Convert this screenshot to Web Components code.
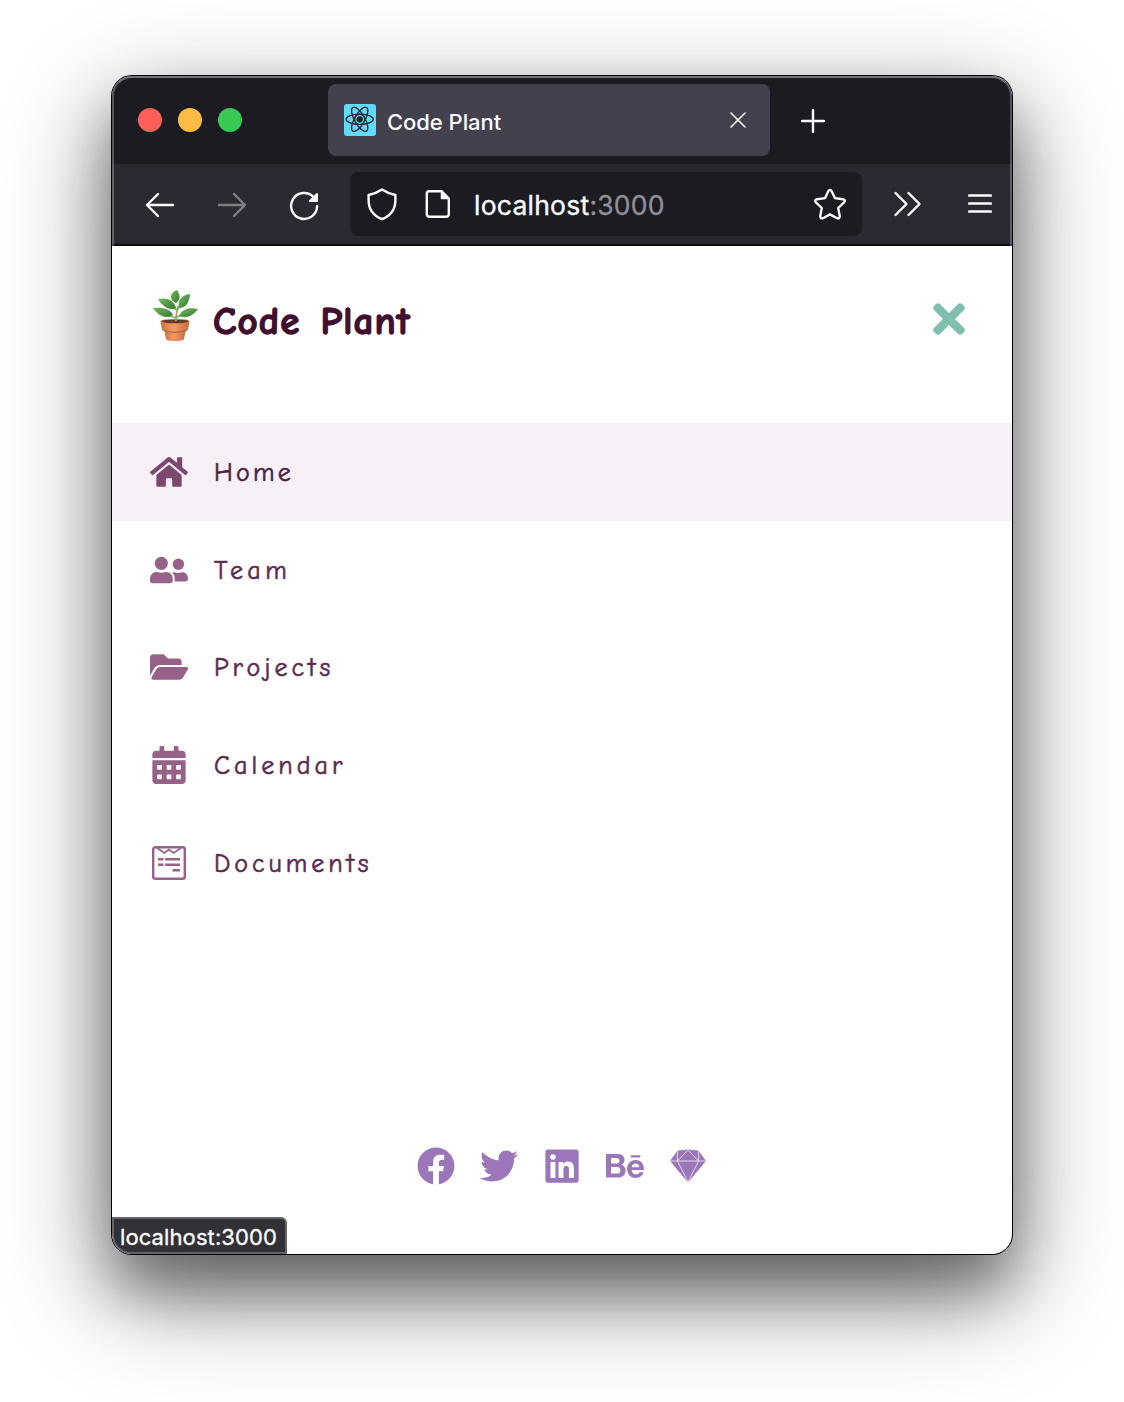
<!DOCTYPE html>
<html lang="en"><head><meta charset="utf-8"><title>Code Plant</title>
<style>
html,body{margin:0;background:#fff}
body{width:1124px;height:1402px;overflow:hidden;font-family:Inter,"Liberation Sans",sans-serif}
</style></head><body>
<browser-window>
  <tab-bar slot="chrome">Code Plant</tab-bar>
  <nav-bar slot="chrome"></nav-bar>
  <site-header>Code Plant</site-header>
  <site-menu>
    <menu-item icon="home" active style="--ls:3.200px">Home</menu-item>
    <menu-item icon="team" style="--ls:4.400px">Team</menu-item>
    <menu-item icon="folder" style="--ls:4.050px">Projects</menu-item>
    <menu-item icon="calendar" style="--ls:4.050px">Calendar</menu-item>
    <menu-item icon="document" style="--ls:3.950px">Documents</menu-item>
  </site-menu>
  <social-links></social-links>
  <status-bubble slot="status">localhost:3000</status-bubble>
</browser-window>
<script>
const ICONS={
home:`<svg width="38" height="34" viewBox="0 0 576 512"><path d="M280.37 148.26L96 300.11V464a16 16 0 0 0 16 16l112.06-.29a16 16 0 0 0 15.92-16V368a16 16 0 0 1 16-16h64a16 16 0 0 1 16 16v95.64a16 16 0 0 0 16 16.05L464 480a16 16 0 0 0 16-16V300L295.67 148.26a12.19 12.19 0 0 0-15.3 0zM571.6 251.47L488 182.56V44.05a12 12 0 0 0-12-12h-56a12 12 0 0 0-12 12v72.61L318.47 43a48 48 0 0 0-61 0L4.34 251.47a12 12 0 0 0-1.6 16.9l25.5 31A12 12 0 0 0 45.15 301l235.22-193.74a12.19 12.19 0 0 1 15.3 0L530.9 301a12 12 0 0 0 16.9-1.6l25.5-31a12 12 0 0 0-1.7-16.93z"/></svg>`,
team:`<svg width="38" height="28" viewBox="0 0 38 28"><circle cx="11.3" cy="7.3" r="6.6"/><circle cx="28.4" cy="8.3" r="5.7"/><path d="M7.6 16Q11.3 17.6 15 16C20 15.4 22.8 19 22.8 23.5V24.6Q22.8 27.3 20 27.3H2.8Q0 27.3 0 24.6V23.5C0 19 2.8 15.4 7.6 16ZM24.6 16.2Q28.4 17.6 31.8 16.2C35.5 16 38 18.7 38 22.4Q38 25.4 35 25.4H24.7C25 21.500 24.600 18.800 22.200 16.700Q23.300 16.100 24.600 16.200Z"/></svg>`,
folder:`<svg width="38" height="34" viewBox="0 0 576 512"><path d="M572.694 292.093L500.27 416.248A63.997 63.997 0 0 1 444.989 448H45.025c-18.523 0-30.064-20.093-20.731-36.093l72.424-124.155A64 64 0 0 1 152 256h399.964c18.523 0 30.064 20.093 20.73 36.093zM152 224h328v-48c0-26.51-21.49-48-48-48H272l-64-64H48C21.49 64 0 85.49 0 112v278.046l69.077-118.418C86.214 242.25 117.989 224 152 224z"/></svg>`,
calendar:`<svg width="34" height="38" viewBox="0 0 448 512"><path fill-rule="evenodd" d="M0 464c0 26.500 21.500 48 48 48h352c26.500 0 48-21.500 48-48V192H0zM64 268q0-12 12-12h40q12 0 12 12v40q0 12-12 12H76q-12 0-12-12zM192 268q0-12 12-12h40q12 0 12 12v40q0 12-12 12h-40q-12 0-12-12zM320 268q0-12 12-12h40q12 0 12 12v40q0 12-12 12h-40q-12 0-12-12zM64 396q0-12 12-12h40q12 0 12 12v40q0 12-12 12H76q-12 0-12-12zM192 396q0-12 12-12h40q12 0 12 12v40q0 12-12 12h-40q-12 0-12-12zM320 396q0-12 12-12h40q12 0 12 12v40q0 12-12 12h-40q-12 0-12-12zM400 64h-48V16c0-8.800-7.200-16-16-16h-32c-8.800 0-16 7.200-16 16v48H160V16c0-8.800-7.200-16-16-16h-32c-8.800 0-16 7.200-16 16v48H48C21.500 64 0 85.500 0 112v48h448v-48c0-26.500-21.500-48-48-48z"/></svg>`,
document:`<svg width="34" height="34" viewBox="0 0 34 34"><rect x="1.200" y="1.200" width="31.600" height="31.600" rx="2" fill="none" stroke="currentColor" stroke-width="2.400"/><path d="M5 2L12.300 7L17 3.500L21.700 7L29 2" fill="none" stroke="currentColor" stroke-width="1.700"/><path d="M6 12h5.500v2.400H6zM13.200 12H28v2.400H13.200zM6 17.500h5.500v2.400H6zM13.200 17.500H28v2.400H13.200zM20.500 23H28v2.400h-7.500z"/></svg>`
};
function element(name,html){
  const t=document.createElement('template');t.innerHTML=html;
  customElements.define(name,class extends HTMLElement{
    constructor(){super();this.attachShadow({mode:'open'}).append(t.content.cloneNode(true));}
    connectedCallback(){const box=this.shadowRoot.querySelector('[data-icon]');if(box)box.innerHTML=ICONS[this.getAttribute('icon')];}
  });
}
element('browser-window',`<style>
:host{display:block;padding:76px 112px}
.w{position:relative;width:900px;height:1178px;border-radius:20px;background:#fff;box-shadow:0 0 0 1px #000,0 36px 60px rgba(0,0,0,.38),0 36px 110px rgba(0,0,0,.46)}
.in{display:flex;flex-direction:column;height:100%;border-radius:20px;overflow:hidden}
.rim{position:absolute;inset:0 0 auto;height:170px;box-sizing:border-box;border:2px solid rgba(255,255,255,.25);border-top-color:rgba(255,255,255,.38);border-bottom:0;border-radius:20px 20px 0 0;pointer-events:none}
</style><div class="w"><div class="in"><slot name="chrome"></slot><slot></slot><slot name="status"></slot></div><div class="rim"></div></div>`);
element('tab-bar',`<style>
:host{display:flex;flex:none;box-sizing:border-box;height:88px;background:#1c1b22;padding:8px 0 8px 26px;align-items:center;color:#fbfbfe}
.d{display:flex;gap:16px;width:190px}.d i{width:24px;height:24px;border-radius:50%}
.t{display:flex;align-items:center;box-sizing:border-box;width:442px;height:72px;border-radius:8px;background:#42414d;padding:0 24px 0 16px}
.n{flex:1;margin-left:11px;padding-top:3px;font-size:22px;letter-spacing:-.05px;font-weight:500;white-space:nowrap}
.p{margin:2px 0 0 31px}svg{display:block}
</style><div class="d"><i style="background:#ff6159"></i><i style="background:#ffbd45"></i><i style="background:#38c955"></i></div>
<div class="t"><svg width="32" height="32" viewBox="0 0 32 32"><rect width="32" height="32" rx="3" fill="#61dafb"/><g fill="none" stroke="#20232a" stroke-width="1.300" transform="translate(15.700 15.300)"><ellipse rx="13.600" ry="5.100"/><ellipse rx="13.600" ry="5.100" transform="rotate(60)"/><ellipse rx="13.600" ry="5.100" transform="rotate(120)"/><circle r="5.300" stroke="none" fill="#61dafb"/><circle r="5"/><circle r="2.500" fill="#20232a"/></g></svg><span class="n"><slot></slot></span><svg width="16" height="16" viewBox="0 0 16 16" fill="none" stroke="#fbfbfe" stroke-width="1.600" stroke-linecap="round"><path d="M1 1l14 14M15 1L1 15"/></svg></div>
<svg class="p" width="24" height="24" viewBox="0 0 24 24" fill="none" stroke="#fbfbfe" stroke-width="2.400" stroke-linecap="round"><path d="M12 1v22M1 12h22"/></svg>`);
element('nav-bar',`<style>
:host{display:flex;flex:none;box-sizing:border-box;height:82px;background:#2b2a33;border-bottom:2px solid #0c0c0d;align-items:center;padding:0 20px 0 32px;color:#fbfbfe}
svg{display:block;fill:none;stroke:#fbfbfe;stroke-width:2.400;stroke-linecap:round;stroke-linejoin:round}
.nav{display:flex;gap:40px;width:206px;padding-top:2px}
.u{display:flex;align-items:center;box-sizing:border-box;width:512px;height:64px;border-radius:8px;background:#1c1b22;padding:0 15px 0 16px}
.a{flex:1;font-size:26.500px;-webkit-text-stroke:.35px;letter-spacing:.24px;margin-left:23px;padding-top:1px}.a span{color:#8f8f96}
</style><div class="nav"><svg width="32" height="32" viewBox="0 0 32 32"><path d="M29 16H3M14 5L3 16l11 11"/></svg><svg width="32" height="32" viewBox="0 0 32 32" style="opacity:.4"><path d="M3 16h26M18 5l11 11-11 11"/></svg><svg width="32" height="32" viewBox="0 0 32 32"><path d="M29.100 17A13 13 0 1 1 25.500 8"/><path d="M29 5v7h-7z" fill="#fbfbfe" stroke-width="2"/></svg></div>
<div class="u"><svg width="32" height="34" viewBox="0 0 32 34"><path d="M16 2.500C12 5.200 7 7 2.600 8V13C2.600 22 7.500 28.800 16 32.200C24.500 28.800 29.400 22 29.400 13V8C25 7 20 5.200 16 2.500Z"/></svg><svg width="26" height="30" viewBox="0 0 26 30" style="margin-left:27px"><path d="M4 2.200H16.500L23.800 9.500V25Q23.800 27.800 21 27.800H4.500Q1.800 27.800 1.800 25V4.500Q1.800 2.200 4 2.200Z"/><path d="M16.500 2.200V9.500H23.800Z" fill="#fbfbfe" stroke-width="1.500"/></svg><span class="a">localhost<span>:3000</span></span><svg width="34" height="32" viewBox="0 0 34 32"><path d="M15.300 3.200Q17 .5 18.700 3.200L21.900 10.100L29.800 11.200Q33.200 12 31 14.500L25.200 20L26.700 27.900Q26.900 31 24 30.200L17 26.400L10 30.200Q7.100 31 7.300 27.900L8.800 20L3 14.500Q.8 12 4.200 11.200L12.100 10.100Z"/></svg></div>
<svg style="margin-left:31px" width="30" height="26" viewBox="0 0 30 26"><path d="M2.500 2L13.500 13L2.500 24M15.500 2l11 11l-11 11"/></svg><svg style="margin:0 0 1px auto" width="24" height="20" viewBox="0 0 24 20"><path d="M1 1.500h22M1 9.500h22M1 17.500h22"/></svg>`);
element('site-header',`<style>
:host{display:flex;flex:none;box-sizing:border-box;height:177px;padding:43px 46px 0 40px;align-items:flex-start}
h1{margin:7px 0 0 13px;font:700 39px/52px "Comic Neue","Comic Sans MS",Lato,sans-serif;letter-spacing:1.100px;word-spacing:5px;-webkit-text-stroke:1.300px;color:#41102f;flex:1}
.x{margin-top:10px;fill:#80bfb0}svg{display:block}
</style><svg width="48" height="54" viewBox="0 0 48 54"><defs><linearGradient id="p"><stop stop-color="#c87544"/><stop offset=".45" stop-color="#f29a63"/><stop offset="1" stop-color="#c06e40"/></linearGradient><linearGradient id="l" x2="1" y2="1"><stop stop-color="#72b85a"/><stop offset="1" stop-color="#337c31"/></linearGradient></defs>
<g stroke="#8fae66" stroke-width="1.800" fill="none"><path d="M24 33Q24 24 26 17M24 29Q14 26 10 24M24 28Q33 26 40 22M25 21Q17 17 12 14M25 21Q29 17 33 10"/></g>
<g fill="url(#l)"><path d="M24 14C17 11 17 4 25 1C29 7 28 11 24 14Z"/><path d="M24 19C17 22 10 17 6 10C15 8 22 11 24 19Z"/><path d="M27 19C25 11 30 6 38 5C37 15 33 19 27 19Z"/><path d="M21 26C15 30 7 28 1 19C10 18 19 20 21 26Z"/><path d="M27 27C30 20 37 18 46 20C41 27 34 30 27 27Z"/></g>
<path d="M12 40H34L32 50Q31 52 23 52Q15 52 14 50Z" fill="url(#p)"/><path d="M8.500 32Q9 30 23 30Q37 30 37.500 32L36 41Q32 43.500 23 43.500Q14 43.500 10 41Z" fill="url(#p)"/><ellipse cx="23" cy="32.300" rx="13" ry="1.900" fill="#643a2b"/><path d="M11.500 41.500Q23 45 34.500 41.500" stroke="#a95d37" fill="none"/><path d="M24 32V27" stroke="#8fae66" stroke-width="1.800"/></svg>
<h1><slot></slot></h1><svg class="x" width="34" height="40" viewBox="-10 34 372 444"><path d="M242.720 256l100.070-100.070c12.280-12.280 12.280-32.190 0-44.480l-22.240-22.240c-12.280-12.280-32.190-12.280-44.480 0L176 189.280 75.930 89.210c-12.280-12.280-32.190-12.280-44.480 0L9.210 111.450c-12.280 12.280-12.280 32.190 0 44.480L109.280 256 9.210 356.070c-12.280 12.280-12.280 32.190 0 44.480l22.240 22.240c12.280 12.280 32.200 12.280 44.480 0L176 322.720l100.070 100.070c12.280 12.280 32.200 12.280 44.480 0l22.240-22.240c12.280-12.280 12.280-32.190 0-44.480L242.720 256z"/></svg>`);
element('site-menu',`<style>:host{display:flex;flex-direction:column;flex:1}</style><slot></slot>`);
element('menu-item',`<style>
:host{display:flex;box-sizing:border-box;height:97.700px;align-items:center;padding-left:38px;color:#5c2a4f}
:host([active]){background:#f7f0f7;color:#4f1f40}
.i{display:flex;justify-content:center;width:38px;color:#96628a;fill:currentColor}:host([active]) .i{color:#7c486e}
.l{margin-left:26px;padding-top:2px;font:500 26px/32px "Comic Neue","Comic Sans MS",Lato,sans-serif;letter-spacing:var(--ls);-webkit-text-stroke:.6px}
</style><span class="i" data-icon></span><span class="l"><slot></slot></span>`);
element('social-links',`<style>:host{display:flex;flex:none;box-sizing:border-box;height:70px;padding-left:305px;align-items:flex-start;fill:#9b76b9}svg{display:block}</style>
<svg width="38" height="38" viewBox="0 0 512 512"><path d="M504 256C504 119 393 8 256 8S8 119 8 256c0 123.780 90.690 226.380 209.250 245V327.690h-63V256h63v-54.640c0-62.150 37-96.480 93.670-96.480 27.140 0 55.520 4.840 55.520 4.840v61h-31.280c-30.800 0-40.410 19.120-40.410 38.730V256h68.780l-11 71.690h-57.780V501C413.310 482.380 504 379.780 504 256z"/></svg>
<svg style="margin-left:25px" width="38" height="38" viewBox="0 0 512 512"><path d="M459.370 151.716c.325 4.548.325 9.097.325 13.645 0 138.720-105.583 298.558-298.558 298.558-59.452 0-114.680-17.219-161.137-47.106 8.447.974 16.568 1.299 25.340 1.299 49.055 0 94.213-16.568 130.274-44.832-46.132-.975-84.792-31.188-98.112-72.772 6.498.974 12.995 1.624 19.818 1.624 9.421 0 18.843-1.300 27.614-3.573-48.081-9.747-84.143-51.980-84.143-102.985v-1.299c13.969 7.797 30.214 12.670 47.431 13.319-28.264-18.843-46.781-51.005-46.781-87.391 0-19.492 5.197-37.360 14.294-52.954 51.655 63.675 129.300 105.258 216.365 109.807-1.624-7.797-2.599-15.918-2.599-24.040 0-57.828 46.782-104.934 104.934-104.934 30.213 0 57.502 12.670 76.670 33.137 23.715-4.548 46.456-13.320 66.599-25.340-7.798 24.366-24.366 44.833-46.132 57.827 21.117-2.273 41.584-8.122 60.426-16.243-14.292 20.791-32.161 39.308-52.628 54.253z"/></svg>
<svg style="margin-left:27px" width="34" height="38" viewBox="0 0 448 512"><path d="M416 32H31.900C14.300 32 0 46.500 0 64.300v383.400C0 465.500 14.300 480 31.900 480H416c17.600 0 32-14.500 32-32.300V64.300c0-17.800-14.400-32.300-32-32.300zM135.400 416H69V202.200h66.500V416zm-33.200-243c-21.300 0-38.500-17.300-38.500-38.500S80.900 96 102.200 96c21.200 0 38.500 17.300 38.500 38.500 0 21.300-17.200 38.500-38.500 38.500zm282.100 243h-66.400V312c0-24.800-.5-56.700-34.500-56.700-34.600 0-39.900 27-39.900 54.900V416h-66.400V202.200h63.700v29.200h.9c8.900-16.800 30.600-34.500 62.900-34.500 67.200 0 79.700 44.300 79.700 101.900V416z"/></svg>
<svg style="margin-left:27px" width="38" height="38" viewBox="0 0 576 512"><path d="M232 237.200c31.800-15.200 48.400-38.200 48.400-74 0-70.600-52.600-87.800-113.300-87.800H0v354.400h171.800c64.400 0 124.900-30.900 124.900-102.900 0-44.500-21.100-77.400-64.700-89.700zM77.900 135.900H151c28.100 0 53.400 7.900 53.400 40.500 0 30.100-19.700 42.200-47.500 42.200h-79v-82.700zm83.300 233.700H77.900V272h84.900c34.300 0 56 14.300 56 50.600 0 35.800-25.900 47-57.600 47zm358.500-240.700H376V94h143.700v34.900zM576 305.200c0-75.900-44.400-139.200-124.900-139.200-78.200 0-131.300 58.800-131.300 135.800 0 79.900 50.300 134.700 131.300 134.700 61.300 0 101-27.600 120.100-86.300H509c-6.700 21.900-34.300 33.500-55.700 33.500-41.300 0-63-24.200-63-65.300h185.100c.3-4.200.6-8.700.6-13.200zM390.400 274c2.300-33.700 24.700-54.800 58.500-54.800 35.400 0 53.200 20.800 56.200 54.800H390.400z"/></svg>
<svg style="margin-left:25px" width="38" height="38" viewBox="0 0 38 38"><path d="M8.500 3.500L19 2.500L29.500 3.500L37 14L19 35.500L1 14Z"/><path d="M1 14H37M8.500 14L19 2.800L29.500 14L19 35L8.500 14L8.300 3.500M29.500 14L29.700 3.500" fill="none" stroke="#fff" stroke-width=".7"/></svg>`);
element('status-bubble',`<style>:host{display:flex;flex:none;box-sizing:border-box;width:175px;height:37px;background:#323135;border:2px solid #656467;border-radius:0 6px 0 19px;align-items:center;padding:3px 0 0 6px;color:#fbfbfe;font-size:22px;letter-spacing:.1px;-webkit-text-stroke:.35px}</style><slot></slot>`);
</script></body></html>
